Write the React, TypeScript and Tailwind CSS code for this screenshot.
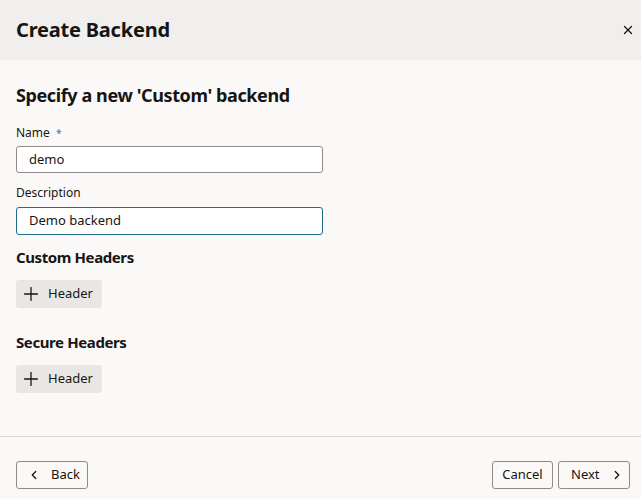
import { Plus, ChevronLeft, ChevronRight, X } from "lucide-react";

const font = { fontFamily: '"Noto Sans", "Open Sans", sans-serif' };

function AddButton() {
  return (
    <button className="flex h-[28px] w-[86px] items-center gap-[6px] rounded-[3px] bg-[#e9e7e4] pl-[4px] text-[13px] text-[#161513]">
      <Plus size={22} strokeWidth={1.4} />
      Header
    </button>
  );
}

export default function App() {
  return (
    <div style={font} className="flex h-[499px] w-[641px] flex-col bg-[#faf9f8] text-[#161513]">
      <header className="flex h-[60px] shrink-0 items-center justify-between bg-[#f1efed] pl-[16px] pr-[1px]">
        <h1 className="text-[20px] font-bold tracking-[-0.2px]">Create Backend</h1>
        <button className="flex h-[24px] w-[24px] items-center justify-center">
          <X size={14} strokeWidth={2.2} />
        </button>
      </header>

      <main className="flex-1 px-[16px] pt-[23px]">
        <h2 className="text-[18px] font-bold leading-[24px] tracking-[-0.4px]">Specify a new 'Custom' backend</h2>

        <label className="mt-[18px] block text-[12px] leading-[16px]">
          Name <span className="ml-[3px] text-[10px] text-[#227ab8]">*</span>
        </label>
        <div className="mt-[5px] flex h-[27px] w-[307px] items-center rounded-[3px] border border-[#8f8b87] bg-white px-[12px] text-[13px]">
          demo
        </div>

        <label className="mt-[12px] block text-[12px] leading-[16px]">Description</label>
        <div className="mt-[6px] flex h-[28px] w-[307px] items-center rounded-[3px] border border-[#1f6e8c] bg-white px-[12px] text-[13px]">
          Demo backend
        </div>

        <h3 className="mt-[12px] text-[15px] font-bold leading-[20px] tracking-[-0.4px]">Custom Headers</h3>
        <div className="mt-[13px]">
          <AddButton />
        </div>

        <h3 className="mt-[24px] text-[15px] font-bold leading-[20px] tracking-[-0.4px]">Secure Headers</h3>
        <div className="mt-[13px]">
          <AddButton />
        </div>
      </main>

      <footer className="flex h-[63px] shrink-0 items-start justify-between border-t border-[#d6d3cf] pl-[16px] pr-[11px] pt-[24px]">
        <button className="flex h-[28px] w-[72px] items-center gap-[10px] rounded-[3px] border border-[#8f8b87] pl-[10px] text-[13px]">
          <ChevronLeft size={14} strokeWidth={2.2} />
          Back
        </button>
        <div className="flex gap-[5px]">
          <button className="flex h-[28px] w-[61px] items-center justify-center rounded-[3px] border border-[#8f8b87] text-[13px]">
            Cancel
          </button>
          <button className="flex h-[28px] w-[72px] items-center gap-[10px] rounded-[3px] border border-[#8f8b87] pl-[12px] text-[13px]">
            Next
            <ChevronRight size={14} strokeWidth={2.2} />
          </button>
        </div>
      </footer>
    </div>
  );
}
